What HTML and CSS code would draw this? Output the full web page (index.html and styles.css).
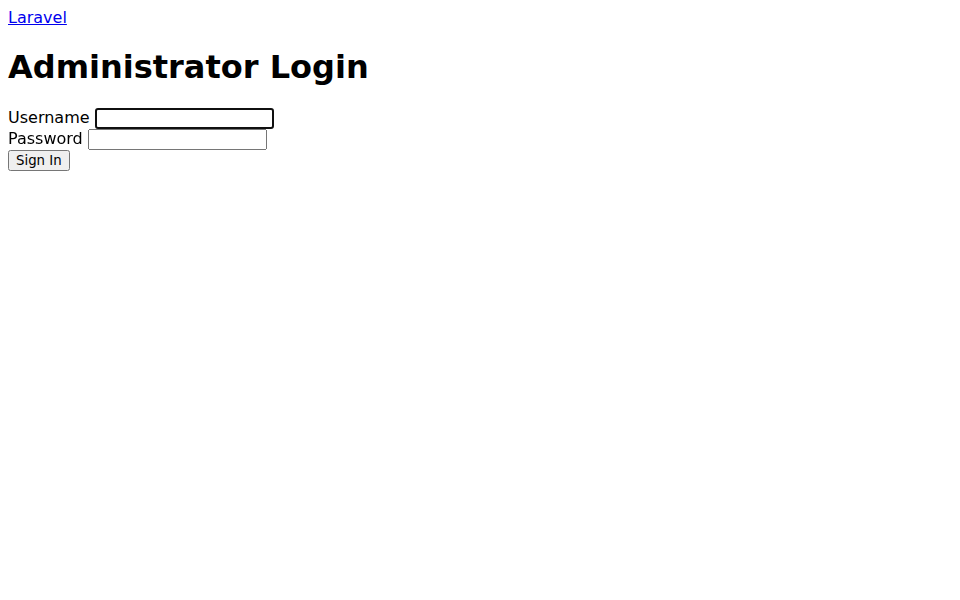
FILE: index.html
```html
<!DOCTYPE html>
<html>
<head>
<meta charset="utf-8">
<title>Administrator Login</title>
<link rel="stylesheet" href="styles.css">
</head>
<body>
<a href="#" class="brand">Laravel</a>
<h1 class="title">Administrator Login</h1>
<form class="login">
<label for="username">Username</label> <input type="text" id="username" name="username" autofocus><br>
<label for="password">Password</label> <input type="password" id="password" name="password"><br>
<button type="button">Sign In</button>
</form>
</body>
</html>
```
FILE: styles.css
```css
body {
  font-family: "DejaVu Sans", sans-serif;
}
.brand {
  color: #0000ee;
}
.title {
  font-size: 2em;
}
.login input,
.login button {
  font-family: "DejaVu Sans", sans-serif;
}
```
